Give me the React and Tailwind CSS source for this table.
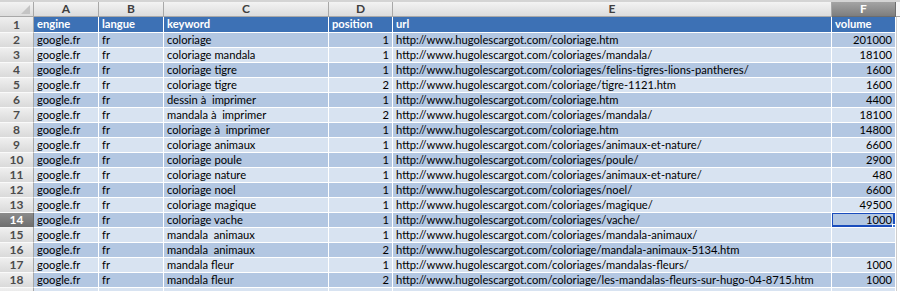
const COLS = ['A', 'B', 'C', 'D', 'E', 'F'];

const HOST = 'http://www.hugolescargot.com/';

const ROWS = [
  ['coloriage', 1, 'coloriage.htm', '201000'],
  ['coloriage mandala', 1, 'coloriages/mandala/', '18100'],
  ['coloriage tigre', 1, 'coloriages/felins-tigres-lions-pantheres/', '1600'],
  ['coloriage tigre', 2, 'coloriage/tigre-1121.htm', '1600'],
  ['dessin à  imprimer', 1, 'coloriage.htm', '4400'],
  ['mandala à  imprimer', 2, 'coloriages/mandala/', '18100'],
  ['coloriage à  imprimer', 1, 'coloriage.htm', '14800'],
  ['coloriage animaux', 1, 'coloriages/animaux-et-nature/', '6600'],
  ['coloriage poule', 1, 'coloriages/poule/', '2900'],
  ['coloriage nature', 1, 'coloriages/animaux-et-nature/', '480'],
  ['coloriage noel', 1, 'coloriages/noel/', '6600'],
  ['coloriage magique', 1, 'coloriages/magique/', '49500'],
  ['coloriage vache', 1, 'coloriages/vache/', '1000'],
  ['mandala  animaux', 1, 'coloriages/mandala-animaux/', ''],
  ['mandala  animaux', 2, 'coloriage/mandala-animaux-5134.htm', ''],
  ['mandala fleur', 1, 'coloriages/mandalas-fleurs/', '1000'],
  ['mandala fleur', 2, 'coloriage/les-mandalas-fleurs-sur-hugo-04-8715.htm', '1000'],
];

const grid = 'grid grid-cols-[34px_65px_65px_165px_64px_439px_64px_1fr]';

function RowHead({ n, active }) {
  return (
    <div
      className={`flex items-center justify-center border-r border-b font-bold text-[12px] leading-none ${
        active
          ? 'bg-gradient-to-b from-[#8c8c8c] to-[#6e6e6e] text-white border-r-[#6a6a6a] border-b-[#f4f4f4]'
          : 'bg-gradient-to-b from-[#efefef] to-[#dadada] text-[#4b4b4b] border-r-[#a8a8a8] border-b-[#fafafa]'
      }`}
    >
      {n}
    </div>
  );
}

function Cell({ children, right, className = '' }) {
  return (
    <div
      className={`px-[3px] border-r border-white whitespace-pre overflow-hidden flex items-center ${
        right ? 'justify-end' : ''
      } ${className}`}
    >
      {children}
    </div>
  );
}

export default function App() {
  return (
    <div className="w-[900px] h-[291px] overflow-hidden bg-white text-[11.2px] text-black font-['Lato','Liberation_Sans',sans-serif]">
      <div className="h-[2px] bg-[#d4d4d4]" />

      {/* column letters */}
      <div className={`${grid} h-[15px]`}>
        <div className="relative bg-gradient-to-b from-[#f3f3f3] to-[#dcdcdc] border-r border-b border-[#a8a8a8]">
          <svg className="absolute right-[3px] bottom-[2px]" width="9" height="9" viewBox="0 0 9 9">
            <path d="M9 0 L9 9 L0 9 Z" fill="#c4c4c4" />
          </svg>
        </div>
        {COLS.map((c) => (
          <div
            key={c}
            className={`flex items-center justify-center border-r border-b font-bold text-[12px] leading-none ${
              c === 'F'
                ? 'bg-gradient-to-b from-[#a4a4a4] to-[#7e7e7e] text-white border-[#6e6e6e]'
                : 'bg-gradient-to-b from-[#f3f3f3] to-[#dcdcdc] text-[#3f3f3f] border-[#a8a8a8]'
            }`}
          >
            {c}
          </div>
        ))}
        <div className="bg-[#f6f6f6] border-b border-[#a8a8a8]" />
      </div>

      {/* header row */}
      <div className={`${grid} h-[16px]`}>
        <RowHead n={1} />
        {['engine', 'langue', 'keyword', 'position', 'url', 'volume'].map((h) => (
          <Cell key={h} className="bg-[#3d71b5] text-white font-bold border-b border-b-white">
            {h}
          </Cell>
        ))}
        <div className="bg-white border-l border-[#cfcfcf]" />
      </div>

      {ROWS.map(([kw, pos, path, vol], i) => {
        const n = i + 2;
        const band = n % 2 === 0 ? 'bg-[#b3c7e2]' : 'bg-[#d8e3f1]';
        return (
          <div key={n} className={`${grid} h-[15px]`}>
            <RowHead n={n} active={n === 14} />
            <Cell className={`${band} border-b border-b-white`}>google.fr</Cell>
            <Cell className={`${band} border-b border-b-white`}>fr</Cell>
            <Cell className={`${band} border-b border-b-white`}>{kw}</Cell>
            <Cell right className={`${band} border-b border-b-white`}>{pos}</Cell>
            <Cell className={`${band} border-b border-b-white`}>{HOST + path}</Cell>
            <Cell right className={`${band} border-b border-b-white relative`}>
              {vol}
              {n === 14 && (
                <>
                  <div className="absolute -left-px -top-px right-0 bottom-0 border-2 border-[#1b4dbd]" />
                  <div className="absolute -right-[3px] -bottom-[3px] w-[6px] h-[6px] bg-[#3a78d6] border border-white" />
                </>
              )}
            </Cell>
            <div className="bg-white border-l border-[#cfcfcf]" />
          </div>
        );
      })}

      {/* partly visible next row */}
      <div className={`${grid} h-[15px]`}>
        <div className="bg-gradient-to-b from-[#efefef] to-[#dadada] border-r border-[#a8a8a8]" />
        {COLS.map((c) => (
          <Cell key={c} className="bg-[#d8e3f1]" />
        ))}
        <div className="bg-white border-l border-[#cfcfcf]" />
      </div>
    </div>
  );
}
